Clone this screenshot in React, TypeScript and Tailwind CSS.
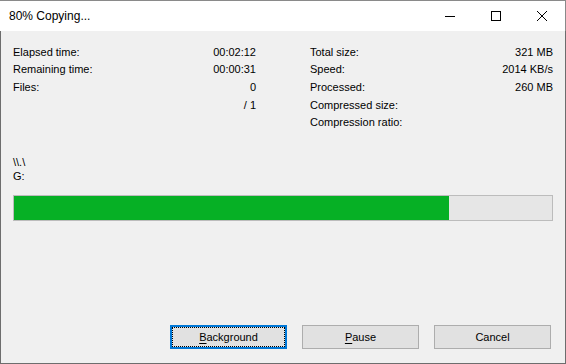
import React from "react";

const leftRows = [
  { label: "Elapsed time:", value: "00:02:12" },
  { label: "Remaining time:", value: "00:00:31" },
  { label: "Files:", value: "0" },
  { label: "", value: "/ 1" },
];

const rightRows = [
  { label: "Total size:", value: "321 MB" },
  { label: "Speed:", value: "2014 KB/s" },
  { label: "Processed:", value: "260 MB" },
  { label: "Compressed size:", value: "" },
  { label: "Compression ratio:", value: "" },
];

const StatColumn = ({ rows }: { rows: { label: string; value: string }[] }) => (
  <div className="flex flex-col">
    {rows.map((row, i) => (
      <div key={i} className="flex h-[17.7px] items-center justify-between">
        <span>{row.label}</span>
        <span>{row.value}</span>
      </div>
    ))}
  </div>
);

const DialogButton = ({
  children,
  focused,
}: {
  children: React.ReactNode;
  focused?: boolean;
}) => (
  <button
    className={
      focused
        ? "relative h-[24px] w-[117px] border-2 border-[#0078d7] bg-[#e1e1e1] text-black"
        : "relative h-[24px] w-[117px] border border-[#adadad] bg-[#e1e1e1] text-black"
    }
  >
    {focused && <span className="absolute inset-0 border border-dotted border-black" />}
    {children}
  </button>
);

export default function App() {
  return (
    <div
      className="flex h-[364px] w-[566px] flex-col bg-[#f0f0f0] text-[11px] text-black"
      style={{ fontFamily: '"Liberation Sans", Arial, sans-serif' }}
    >
      <div className="flex h-[31px] shrink-0 items-center border-t border-r border-[#8a8a8a] bg-white">
        <span className="ml-[9px] flex-1 text-[12px]">80% Copying...</span>
        <div className="flex h-full">
          <div className="flex w-[46px] items-center justify-center">
            <svg width="10" height="10" viewBox="0 0 10 10">
              <line x1="0" y1="5.5" x2="10" y2="5.5" stroke="#000" strokeWidth="1" />
            </svg>
          </div>
          <div className="flex w-[46px] items-center justify-center">
            <svg width="10" height="10" viewBox="0 0 10 10">
              <rect x="0.5" y="0.5" width="9" height="9" fill="none" stroke="#000" strokeWidth="1" />
            </svg>
          </div>
          <div className="flex w-[46px] items-center justify-center">
            <svg width="10" height="10" viewBox="0 0 10 10">
              <path d="M0 0 L10 10 M10 0 L0 10" stroke="#000" strokeWidth="1" />
            </svg>
          </div>
        </div>
      </div>

      <div className="flex flex-1 flex-col border-x border-b border-[#6d6d6d] pl-[12px] pr-[12px] pt-[12px] pb-[14px]">
        <div className="grid grid-cols-[243px_243px] gap-x-[54px]">
          <StatColumn rows={leftRows} />
          <StatColumn rows={rightRows} />
        </div>

        <div className="mt-[25px] flex flex-col leading-[13.5px]">
          <span>\\.\</span>
          <span>G:</span>
        </div>

        <div className="mt-[12px] h-[26px] w-[540px] border border-[#bcbcbc] bg-[#e6e6e6]">
          <div className="h-full w-[435px] bg-[#06b025]" />
        </div>

        <div className="mt-auto flex justify-end gap-[15px] pr-[2px]">
          <DialogButton focused>
            <span className="underline underline-offset-2">B</span>ackground
          </DialogButton>
          <DialogButton>
            <span className="underline underline-offset-2">P</span>ause
          </DialogButton>
          <DialogButton>Cancel</DialogButton>
        </div>
      </div>
    </div>
  );
}
